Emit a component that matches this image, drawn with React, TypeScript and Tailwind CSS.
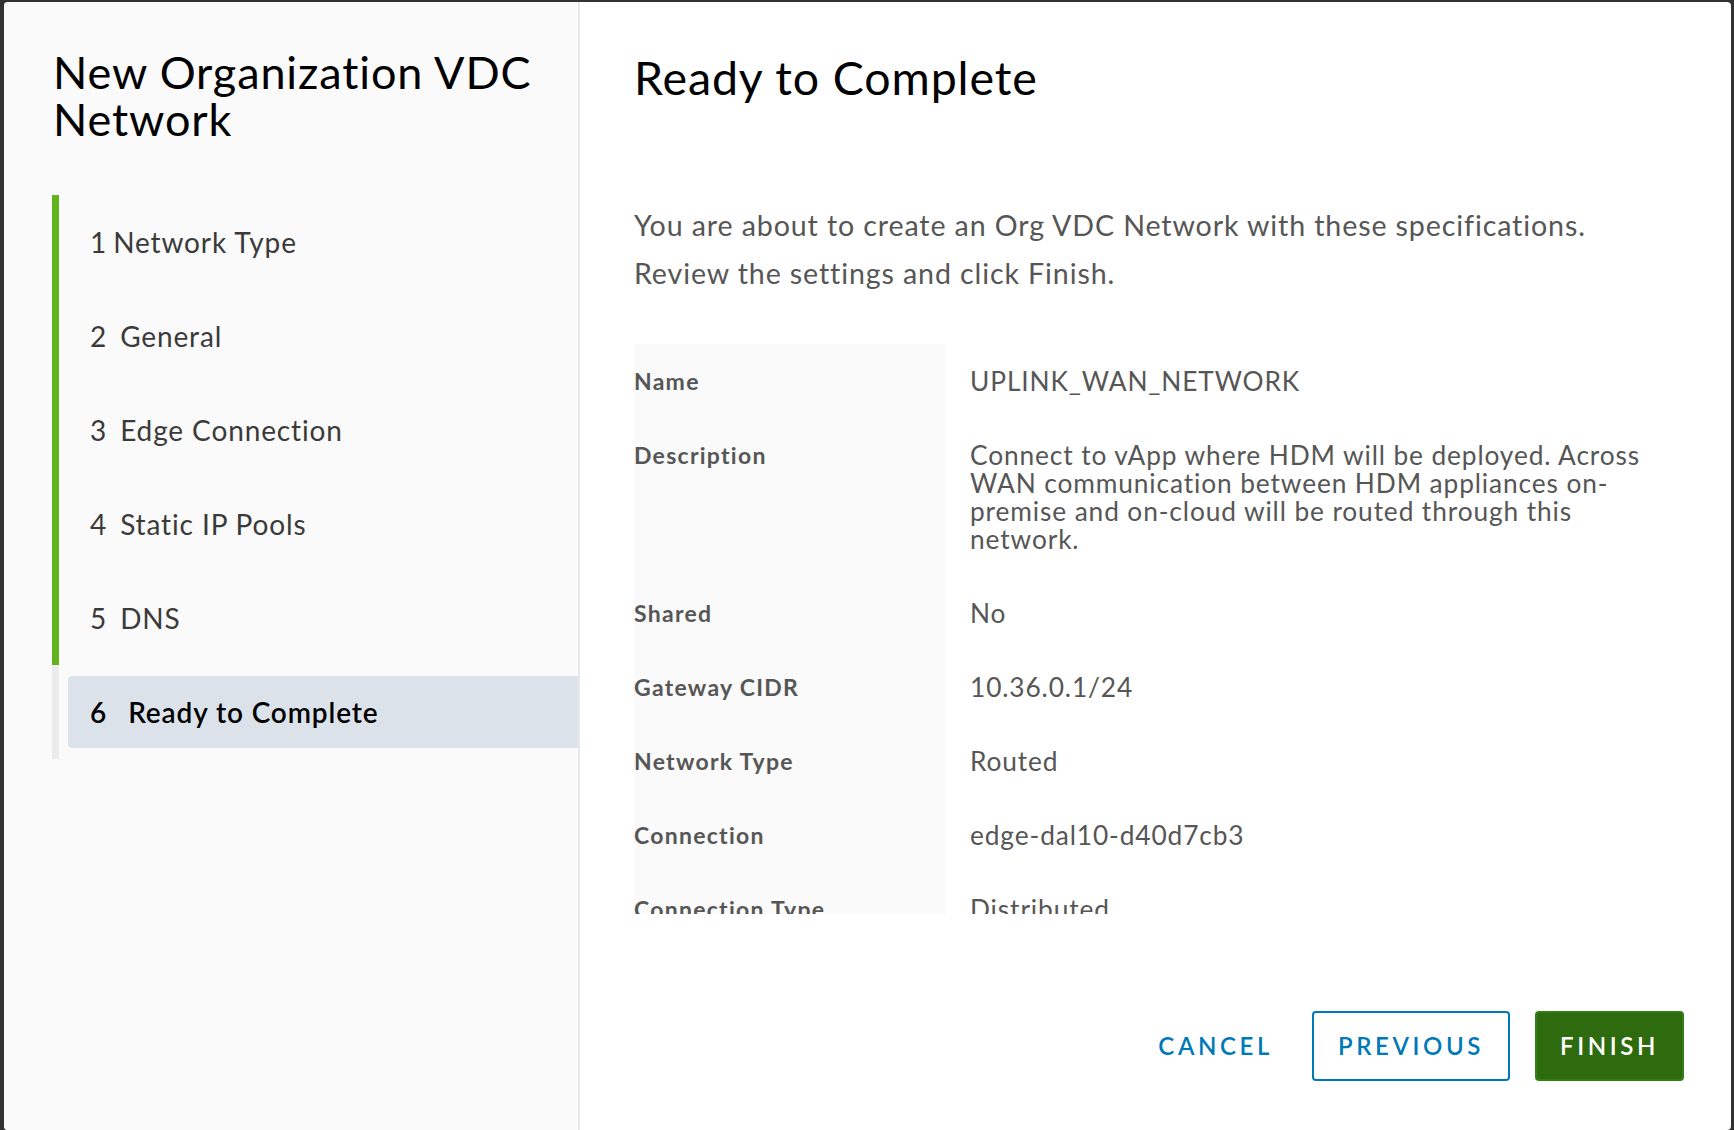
const steps = [
  { n: 1, label: "Network Type", done: true },
  { n: 2, label: "General", done: true },
  { n: 3, label: "Edge Connection", done: true },
  { n: 4, label: "Static IP Pools", done: true },
  { n: 5, label: "DNS", done: true },
  { n: 6, label: "Ready to Complete", done: false, active: true },
];

const rows = [
  { label: "Name", value: "UPLINK_WAN_NETWORK" },
  {
    label: "Description",
    value:
      "Connect to vApp where HDM will be deployed. Across WAN communication between HDM appliances on-premise and on-cloud will be routed through this network.",
  },
  { label: "Shared", value: "No" },
  { label: "Gateway CIDR", value: "10.36.0.1/24" },
  { label: "Network Type", value: "Routed" },
  { label: "Connection", value: "edge-dal10-d40d7cb3" },
  { label: "Connection Type", value: "Distributed" },
];

export default function App() {
  return (
    <div className="h-[1130px] w-[1734px] overflow-hidden bg-[#323232] pl-[4px] pr-[3px] pt-[2px] font-['Lato',sans-serif] tracking-[0.055em]">
      <div className="flex h-[1128px] overflow-hidden rounded-[4px] bg-white">
        {/* Step nav */}
        <aside className="w-[576px] shrink-0 border-r-2 border-[#e8e8e8] bg-[#fafafa] pl-[49px] pr-[30px] pt-[47px]">
          <h1 className="text-[45px] font-normal leading-[47px] text-black">New Organization VDC Network</h1>
          <nav className="mt-[52px] -mr-[30px] -ml-px flex flex-col">
            {steps.map((s) => (
              <div key={s.n} className="flex h-[94px]">
                <div className={s.done ? "w-[7px] bg-[#62b41c]" : "w-[7px] bg-[#ececec]"} />
                <div className="flex-1 py-[11px] pl-[9px]">
                  <div
                    className={
                      s.active
                        ? "flex h-full items-center rounded-l-[4px] bg-[#dbe2ea] pl-[22px] text-[28px] font-semibold text-black"
                        : "flex h-full items-center pl-[22px] text-[28px] text-[#3a3a3a]"
                    }
                  >
                    <span className={s.active ? "mr-[21px]" : s.n === 1 ? "mr-[6px]" : "mr-[13px]"}>{s.n}</span>
                    <span>{s.label}</span>
                  </div>
                </div>
              </div>
            ))}
          </nav>
        </aside>

        {/* Page content */}
        <main className="flex-1 pl-[54px] pr-[47px] pt-[51px]">
          <h2 className="text-[46.5px] font-normal leading-[48px] text-black">Ready to Complete</h2>
          <p className="mt-[100px] text-[28.6px] leading-[48px] text-[#565656]">
            You are about to create an Org VDC Network with these specifications.
            <br />
            Review the settings and click Finish.
          </p>

          <div className="mt-[47px] h-[570px] overflow-hidden">
            {rows.map((r) => (
              <div key={r.label} className="flex">
                <div className="w-[312px] shrink-0 bg-[#fafafa] pb-[23px] pt-[23px] text-[23px] font-bold leading-[28px] tracking-[0.055em] text-[#565656]">
                  {r.label}
                </div>
                <div className="flex-1 pb-[23px] pl-[24px] pr-[28px] pt-[23px] text-[26.3px] leading-[28px] text-[#565656]">
                  {r.value}
                </div>
              </div>
            ))}
          </div>

          <div className="mt-[97px] flex items-center justify-end">
            <button className="mr-[14px] h-[70px] px-[25px] text-[24px] font-semibold tracking-[0.15em] text-[#0079b8]">
              CANCEL
            </button>
            <button className="h-[70px] rounded-[4px] border-2 border-[#0079b8] bg-white px-[24px] text-[24px] font-semibold tracking-[0.15em] text-[#0079b8]">
              PREVIOUS
            </button>
            <button className="ml-[25px] h-[70px] rounded-[4px] border-2 border-[#328014] bg-[#2e6b0e] px-[23px] text-[24px] font-semibold tracking-[0.15em] text-white">
              FINISH
            </button>
          </div>
        </main>
      </div>
    </div>
  );
}
